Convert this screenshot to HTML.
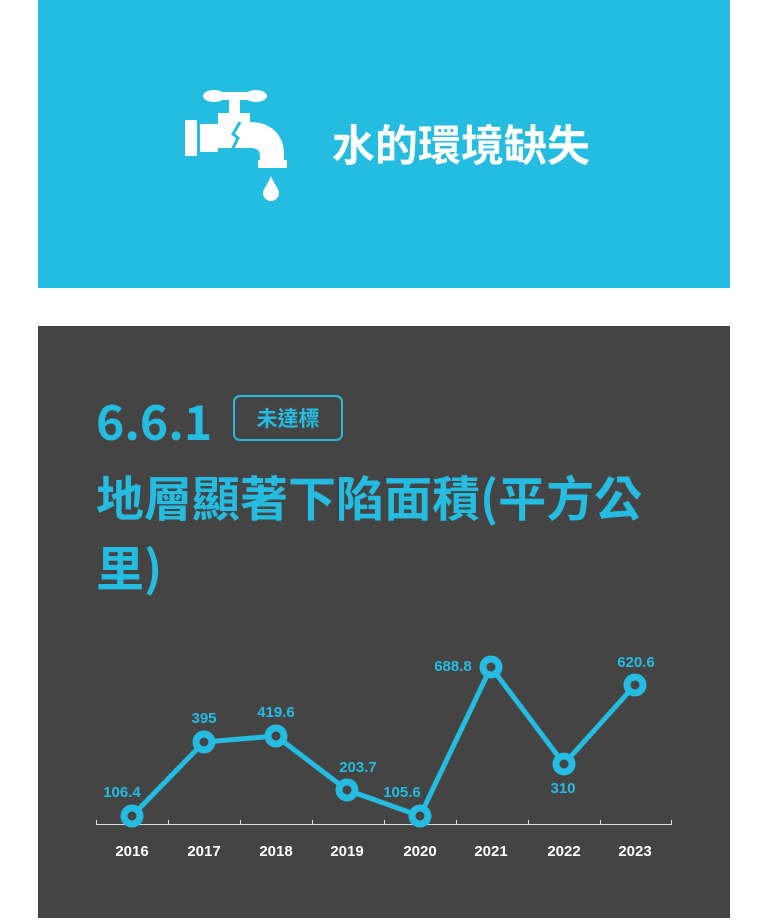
<!DOCTYPE html><html><head><meta charset="utf-8"><style>
body{margin:0;background:#fff;width:768px;height:920px;position:relative;overflow:hidden;font-family:"Liberation Sans","Noto Sans CJK TC",sans-serif}
.top{position:absolute;left:38px;top:0;width:692px;height:288px;background:#25bce2}
.dark{position:absolute;left:38px;top:326px;width:692px;height:592px;background:#444}
.t{position:absolute;color:#fff;font-weight:bold;font-family:"Noto Sans CJK TC",sans-serif;white-space:nowrap}
</style></head><body>
<div class="top">
<div class="t" style="left:294px;top:115px;font-size:43px;line-height:56px">水的環境缺失</div>
</div>
<div class="dark">
<div class="t" style="left:58px;top:61px;font-size:48px;line-height:64px;color:#25bce2">6.6.1</div>
<div style="position:absolute;left:195px;top:69px;width:106px;height:42px;border:2px solid #25bce2;border-radius:7px;color:#25bce2;font-weight:bold;font-size:21px;line-height:42px;text-align:center;font-family:'Noto Sans CJK TC',sans-serif">未達標</div>
<div class="t" style="left:58px;top:134px;font-size:48px;line-height:70px;color:#25bce2">地層顯著下陷面積(平方公<br>里)</div>
</div>
<svg style="position:absolute;left:0;top:0" width="768" height="920">
<g fill="#fff">
<rect x="185" y="120" width="12" height="36" rx="1"/>
<ellipse cx="214" cy="96" rx="11" ry="6"/><ellipse cx="256" cy="96" rx="11" ry="6"/>
<rect x="212" y="92" width="46" height="8"/>
<rect x="229" y="98" width="11" height="16"/>
<path d="M200 124 H218 V113 H250 V122 C272 122 284 136 284 154 V162 H260 V156 C260 150 256 148 250 148 H218 V152 H200 Z"/>
<rect x="258" y="160" width="29" height="8" rx="1"/>
<path d="M271 176 C268 184 263 189 263 193 A8 8 0 0 0 279 193 C279 189 274 184 271 176Z"/>
</g>
<path d="M240 122 L233 134 L238 138 L230 154" stroke="#25bce2" stroke-width="3" fill="none"/>
<g stroke="#ddd" stroke-width="1"><line x1="96" y1="824.5" x2="672" y2="824.5"/>
<line x1="96.5" y1="820" x2="96.5" y2="825"/><line x1="168.5" y1="820" x2="168.5" y2="825"/><line x1="240.5" y1="820" x2="240.5" y2="825"/><line x1="312.5" y1="820" x2="312.5" y2="825"/><line x1="384.5" y1="820" x2="384.5" y2="825"/><line x1="456.5" y1="820" x2="456.5" y2="825"/><line x1="528.5" y1="820" x2="528.5" y2="825"/><line x1="600.5" y1="820" x2="600.5" y2="825"/><line x1="671.5" y1="820" x2="671.5" y2="825"/></g>
<polyline points="132,816 204,742 276,736 347,790 420,816 491,667 564,764 635,685" fill="none" stroke="#25bce2" stroke-width="5"/>
<g fill="#444" stroke="#25bce2" stroke-width="7">
<circle cx="132" cy="816" r="8"/><circle cx="204" cy="742" r="8"/><circle cx="276" cy="736" r="8"/><circle cx="347" cy="790" r="8"/><circle cx="420" cy="816" r="8"/><circle cx="491" cy="667" r="8"/><circle cx="564" cy="764" r="8"/><circle cx="635" cy="685" r="8"/></g>
<g fill="#25bce2" font-family="Liberation Sans" font-weight="bold" font-size="15" text-anchor="middle">
<text x="122" y="797">106.4</text><text x="204" y="723">395</text><text x="276" y="717">419.6</text><text x="358" y="772">203.7</text><text x="402" y="797">105.6</text><text x="453" y="671">688.8</text><text x="563" y="793">310</text><text x="636" y="667">620.6</text></g>
<g fill="#fff" font-family="Liberation Sans" font-weight="bold" font-size="15" text-anchor="middle">
<text x="132" y="856">2016</text><text x="204" y="856">2017</text><text x="276" y="856">2018</text><text x="347" y="856">2019</text><text x="420" y="856">2020</text><text x="491" y="856">2021</text><text x="564" y="856">2022</text><text x="635" y="856">2023</text></g>
</svg>
</body></html>
